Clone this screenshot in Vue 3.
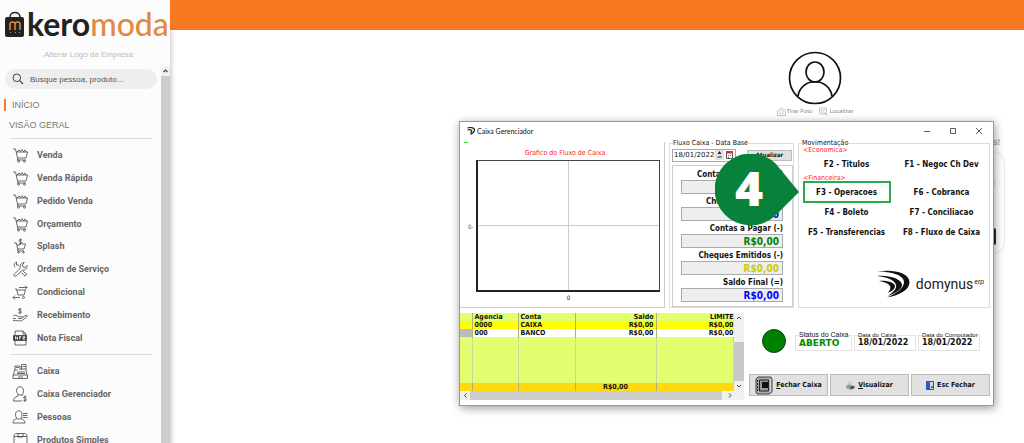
<script setup>
const cart = '<path d="M1 2h2.5l2 9h8.5l1.5-6H4.2"/><path d="M5 5l2-2 1.5 1.5L10 2.5l1.5 2L13 3l1 2"/><path d="M6 11l-.5 2h8"/><circle cx="6.5" cy="14.2" r="1"/><circle cx="12.5" cy="14.2" r="1"/>'
const smallCart = '<path d="M2 5h2.3l1.4 6H12l1.5-5H10M5 7h3"/><path d="M6 11l-.4 2H12"/><circle cx="6.5" cy="14.3" r=".8"/><circle cx="11.5" cy="14.3" r=".8"/>'
const dollar = (x, y) => `<path d="M${x + 1.5} ${y}q-1.5-1-2.6-.2c-1 .9 0 1.5 1 1.8s2.300 1 1 2q-1.300.7-2.600-.3M${x} ${y - 1.3}v6.200"/>`

const groups = [
  {
    name: 'sales',
    items: [
      { label: 'Venda', icon: cart },
      { label: 'Venda Rápida', icon: cart },
      { label: 'Pedido Venda', icon: cart },
      { label: 'Orçamento', icon: cart },
      { label: 'Splash', icon: smallCart + dollar(8.5, 2) },
      { label: 'Ordem de Serviço', icon: '<path d="M2 13.500 8.200 7.300C7.500 4 9.500 1.500 12.300 1.500L10.300 4l.7 2 2 .5 2-2c.3 3-2 5-4.600 4.500L4 15.200c-1.500.3-2.500-.7-2-1.700z"/><path d="M3 6.500c-1.500-2-1-4.500 1.500-5.500v3l2.500.2M11 10.200l3.800 3-1.600 2-3.700-3.500"/>' },
      { label: 'Condicional', icon: '<path d="M3 5h1.500l1.500 6h6l1.500-5H4.800"/><path d="M7 3.500h8M13 1.500l2 2-2 2M1 13.500h7M3 11.500l-2 2 2 2"/><circle cx="11.500" cy="13.500" r="1"/>' },
      { label: 'Recebimento', icon: dollar(8, 2.3) + '<path d="M1 9c2-1.500 4-.5 5.500.7h3c1.500.2 1.300 1.800-.2 1.800H6M9.800 10.500 14 8.300c1.300-.4 1.800.8.8 1.500l-5 4c-2.800.6-5-.8-8.800-.2M1 11.500h3"/>' },
      { label: 'Nota Fiscal', icon: '<path d="M3 5V1h8l3 3v2M3 11v4h11v-4M11 1v3h3"/><path d="M1.500 5.500h13v5h-13z" fill="#333"/><path d="M3.500 9.500v-3l2 3v-3M7.500 9.500v-3h2M7.500 8h1.500M11 8h2V6.700h-2v2.600h2" stroke="#fff"/>' }
    ]
  },
  {
    name: 'records',
    items: [
      { label: 'Caixa', icon: '<path d="M1 12h14.500v3.500H1zM1.500 12l1-5h3M15 12l-1-5V1.500H9.500V7M3 7V3h5v4M6 14h5"/><path d="M5 9h8M5 10.500h8M4 4.500h3M10.500 3.500h3M9 6h5"/>' },
      { label: 'Caixa Gerenciador', icon: '<path d="M4.500 4.500c0-5 7-5 7 0S9.500 9 8 9 4.500 7.500 4.500 4.500zM6 8.500v1.700C3 11 1.500 12 1.500 15H10M10 8.500v1.500"/>' + dollar(13, 11) },
      { label: 'Pessoas', icon: '<path d="M3.500 5.500c0-5 6.500-5 6.500 0S8.500 10 6.800 10 3.500 8.500 3.500 5.500zM5 9.500C2 10.700 1 11.500 1 14h12c0-2.500-1.500-3.500-4.300-4.500M11 4.500h4.500M11 6.500h4.500M11 8.500h4.500"/>' },
      { label: 'Produtos Simples', icon: '<path d="M2 3l1.500-1.500h10L15 3v12.500H2zM2 4.500h13M6 1.500v3.500h5V1.500M9.500 12h1M12 12h1"/>' }
    ]
  }
]

const flows = [
  { label: 'Contas a Receber (+)', value: 'R$0,00', tone: 'green' },
  { label: 'Cheques Receb (+)', value: 'R$0,00', tone: 'blue' },
  { label: 'Contas a Pagar (-)', value: 'R$0,00', tone: 'green' },
  { label: 'Cheques Emitidos (-)', value: 'R$0,00', tone: 'gold' },
  { label: 'Saldo Final (=)', value: 'R$0,00', tone: 'blue' }
]
</script>

<template>
  <div class="app">
    <aside class="sidebar">
      <div class="brand">
        <div class="logo">
          <svg width="21" height="28" viewBox="0 0 21 28">
            <path d="M5 9V6c0-6 10-6 10 0v3" fill="none" stroke="#222" stroke-width="1.500" />
            <rect x="0" y="6" width="19" height="20" rx="2" fill="#222" />
            <path d="M5 19v-6q0-2 2.500-2T10 13v6M10 13q0-2 2.500-2t2.500 2v6" fill="none" stroke="#e58a3c" stroke-width="1.500" />
            <path d="M5 21.500h1M10 21.500h1M14 21.500h1" stroke="#e58a3c" />
          </svg>
          <span class="word"><b>kero</b><span>moda</span></span>
        </div>
        <a href="#" class="change-logo">Alterar Logo da Empresa</a>
      </div>
      <div class="scroller">
        <div class="menu">
          <label class="search">
            <svg width="12" height="12" viewBox="0 0 12 12" fill="none" stroke="#444"><circle cx="4.800" cy="4.800" r="3.800" /><path d="M7.600 7.600 11 11" stroke-width="1.300" /></svg>
            <input type="text" placeholder="Busque pessoa, produto..." aria-label="Busque pessoa, produto" />
          </label>
          <a href="#" class="top active">INÍCIO</a>
          <a href="#" class="top">VISÃO GERAL</a>
          <nav v-for="group in groups" :key="group.name" class="group" :class="group.name">
            <a v-for="item in group.items" :key="item.label" href="#" class="item">
              <svg width="16" height="16" viewBox="0 0 16 16" v-html="item.icon" />
              <span>{{ item.label }}</span>
            </a>
          </nav>
        </div>
        <div class="track">
          <svg width="9" height="10" viewBox="0 0 9 10"><path d="M2.500 6 4.500 4l2 2" fill="none" stroke="#444" stroke-width="1.200" /></svg>
        </div>
      </div>
    </aside>

    <main class="main">
      <header class="bar"></header>
      <section class="profile">
        <svg width="54" height="54" viewBox="0 0 54 54" fill="none" stroke="#111" stroke-width="1.700">
          <circle cx="27" cy="27" r="25.500" />
          <ellipse cx="27" cy="21" rx="9" ry="10" />
          <path d="M10 45c3-19 31-19 34 0" />
        </svg>
        <div class="photo-links">
          <a href="#"><svg width="9" height="9" viewBox="0 0 9 9"><path d="M.5 3.500 4.500.7l4 2.800v5h-8z" /><circle cx="4.500" cy="5" r="2" /></svg>Tirar Foto</a>
          <a href="#"><svg width="9" height="9" viewBox="0 0 9 9"><path d="M.5 1h7v6h-7zM.5 3h7M2 5h3M5 5l3.500 3.500M6 7.500h2" /></svg>Localizar</a>
        </div>
        <p class="greeting">s!</p>
        <div class="card">
          <svg class="arc" width="8" height="28" viewBox="0 0 8 28" fill="none"><path d="M0 2.500h7" stroke="#ddd" /><path d="M0 19c6 0 7-6 5-14" stroke="#f3dccb" stroke-width="2" /></svg>
          <div class="dark"></div>
        </div>
      </section>
    </main>

    <section class="window">
      <div class="titlebar">
        <svg width="8" height="8" viewBox="0 0 8 8" fill="none" stroke="#222"><path d="M.5 1C4-.2 8 1 7.500 3.500c-.5 1.800-2 3-4 4M.5 3c3-1 6 .5 3 3" stroke-width="1.200" /></svg>
        <span class="title">Caixa Gerenciador</span>
        <button aria-label="Minimizar"><svg width="8" height="8"><path d="M1 4.500h6" /></svg></button>
        <button aria-label="Maximizar"><svg width="8" height="8"><path d="M1.500 1.500h5v5h-5z" /></svg></button>
        <button aria-label="Fechar janela"><svg width="8" height="8"><path d="M1 1l6 6M7 1 1 7" /></svg></button>
      </div>

      <div class="upper">
        <div class="chart">
          <i class="dash"></i>
          <h2>Grafico do Fluxo de Caixa</h2>
          <div class="plot-row"><span>0-</span><div class="plot"></div></div>
          <div class="x-label">0</div>
        </div>

        <fieldset class="flow">
          <legend>Fluxo Caixa - Data Base</legend>
          <div class="date-row">
            <div class="date">
              <input type="text" value="18/01/2022" aria-label="Data base" />
              <svg width="19" height="10" viewBox="0 0 19 10"><path d="M0 0h9v10H0z" fill="#e3e3e3" /><path d="M4.500 1 6.500 4h-4zM2.500 6.500h4v1h-4z" fill="#222" /><path d="M11.500 1.500h6v7h-6z" fill="#fff" stroke="#555" /><path d="M11 1h7v2.500h-7z" fill="#c33" /><path d="M13 5h1v1h-1zM15 5h1v1h-1zM13 7h1v1h-1z" fill="#36a" /></svg>
            </div>
            <button class="update">Atualizar</button>
          </div>
          <div class="totals">
            <label v-for="f in flows" :key="f.label">{{ f.label }}
              <input type="text" readonly :value="f.value" :class="f.tone" />
            </label>
          </div>
        </fieldset>

        <fieldset class="moves">
          <legend>Movimentação</legend>
          <h3>&lt;Economica&gt;</h3>
          <div class="pair"><button>F2 - Titulos</button><button>F1 - Negoc Ch Dev</button></div>
          <h3 class="second">&lt;Financeira&gt;</h3>
          <div class="pair"><button class="marked">F3 - Operacoes</button><button>F6 - Cobranca</button></div>
          <div class="pair"><button>F4 - Boleto</button><button>F7 - Conciliacao</button></div>
          <div class="pair"><button>F5 - Transferencias</button><button>F8 - Fluxo de Caixa</button></div>
          <div class="domynus">
            <svg width="34" height="28" viewBox="0 0 34 28" fill="#111">
              <path d="M0 1.500C15-1 32 2 32.500 12 32.500 20 23 25 10 27.500c9-4 17-9 17-15.500C27 5 14 1.500 0 1.500z" />
              <path d="M0 6C12 5 25 9 25 15 25 19 19 23 11 26 16 22 20 19 19 15 18 10 10 7 0 6z" />
              <path d="M2 11C10 10 18 13 18 16 18 19 15 21 11 23 13 20 14 18 13 16 11 13 7 12 2 11z" />
            </svg>
            <span>domynus</span><sup>erp</sup>
          </div>
        </fieldset>
      </div>

      <div class="lower">
        <div class="grid-box">
          <div class="grid-main">
            <table>
              <colgroup><col class="c0" /><col class="c1" /><col class="c2" /><col class="c3" /><col /></colgroup>
              <thead><tr><th></th><th>Agencia</th><th>Conta</th><th class="r">Saldo</th><th class="r">LIMITE</th></tr></thead>
              <tbody>
                <tr class="sel"><td></td><td>0000</td><td>CAIXA</td><td class="r">R$0,00</td><td class="r">R$0,00</td></tr>
                <tr class="row"><td class="handle"></td><td>000</td><td>BANCO</td><td class="r">R$0,00</td><td class="r">R$0,00</td></tr>
                <tr class="blank"><td></td><td></td><td></td><td></td><td></td></tr>
              </tbody>
              <tfoot><tr><td></td><td></td><td></td><td class="c">R$0,00</td><td></td></tr></tfoot>
            </table>
            <div class="vscroll">
              <svg width="10" height="10" viewBox="0 0 10 10"><path d="M3 6l2-2 2 2" /></svg>
              <div class="thumb"></div>
              <svg width="10" height="10" viewBox="0 0 10 10"><path d="M3 4l2 2 2-2" /></svg>
            </div>
          </div>
          <div class="hscroll">
            <svg width="10" height="9" viewBox="0 0 10 9"><path d="M6.500 2.500l-2 2 2 2" /></svg>
            <div class="thumb"></div>
            <svg width="22" height="9" viewBox="0 0 22 9"><path d="M7 2.500l2 2-2 2" /></svg>
          </div>
        </div>

        <div class="side">
          <div class="status">
            <svg width="24" height="24" viewBox="0 0 24 24"><circle cx="12" cy="12" r="11.500" fill="#008000" stroke="#143c14" /></svg>
            <fieldset class="first"><legend>Status do Caixa</legend><strong class="open">ABERTO</strong></fieldset>
            <fieldset><legend>Data do Caixa</legend><strong>18/01/2022</strong></fieldset>
            <fieldset><legend>Data do Computador</legend><strong>18/01/2022</strong></fieldset>
          </div>
          <div class="actions">
            <button>
              <svg width="18" height="19" viewBox="0 0 18 19"><path d="M1 3l2-2h13l1 2v13l-3 2H2l-1-2z" fill="#aaa" stroke="#444" /><path d="M4.500 4h9v11h-9z" fill="#999" stroke="#222" /><path d="M7 6h6v6H7z" fill="#111" /><path d="M2.500 4v12" stroke="#222" stroke-dasharray="2 1" /><path d="M15.500 3v13" stroke="#ddd" /></svg>
              <span><u>F</u>echar Caixa</span>
            </button>
            <button>
              <svg width="9" height="9" viewBox="0 0 9 9"><path d="M2 0h3l1 4H2z" fill="#bcd3ee" /><path d="M0 5l3-1.500L9 5v2L5 9 0 7z" fill="#999" /><path d="M4 6l4-1v2L5 8z" fill="#444" /></svg>
              <span><u>V</u>isualizar</span>
            </button>
            <button>
              <svg width="8" height="9" viewBox="0 0 8 9"><path d="M.5.5h7v8h-7z" fill="#cde" stroke="#456" /><path d="M0 0l4 1.500V9L0 8z" fill="#3157c8" /><path d="M5 5h2v2H5z" fill="#2a9a4a" /></svg>
              <span>Esc Fechar</span>
            </button>
          </div>
        </div>
      </div>

      <svg class="step" width="85" height="72" viewBox="0 0 85 72" role="img" aria-label="Passo 4">
        <path d="M84 38 60 62A36 36 0 1 1 61 10z" fill="#08813a" />
        <text x="34" y="52" text-anchor="middle">4</text>
      </svg>
    </section>
  </div>
</template>

<style>
body { background: #fff; }
</style>

<style scoped>
* { box-sizing: border-box; }
a { color: inherit; text-decoration: none; }
button, input { font: inherit; color: inherit; padding: 0; border: 0; background: none; min-width: 0; }
h2, h3, p { margin: 0; font-weight: 400; }
fieldset { margin: 0; padding: 0; min-width: 0; border: 1px solid #ddd; }
legend { padding: 0; font-size: 7px; line-height: 8px; white-space: nowrap; }
svg { flex: none; display: block; }

.app { position: relative; display: flex; height: 100vh; overflow: hidden; font-family: "Liberation Sans", sans-serif; color: #555; }

.sidebar { display: flex; flex-direction: column; flex: 0 0 170px; min-width: 0; background: #fcfcfc; box-shadow: 1px 30px 5px rgba(0, 0, 0, .25); z-index: 1; }
.brand { display: flex; flex-direction: column; height: 66px; padding: 11px 0 0 5px; }
.logo { display: flex; gap: 1px; height: 28px; }
.word { font: 500 32px/26px Lato, sans-serif; color: #df8a41; }
.word b { font-weight: 700; color: #222; }
.change-logo { margin: 11px 4px 0 6px; text-align: center; font-size: 8px; line-height: 10px; color: #bbb; }
.scroller { display: flex; flex: 1; min-height: 0; }
.menu { flex: 1; min-width: 0; overflow: hidden; padding: 3px 4px 0 5px; }
.track { flex: 0 0 9px; background: #cdcdcd; }
.track svg { background: #f1f1f1; }
.search { display: flex; align-items: center; gap: 6px; height: 20px; padding: 0 7px; border-radius: 10px; background: #eee; }
.search input { flex: 1; outline: 0; font-size: 8px; }
.search input::placeholder { color: #555; opacity: 1; }
.top { display: block; margin-top: 8px; padding-left: 4px; font-size: 9px; line-height: 12px; color: #777; }
.top.active { margin-top: 10px; margin-left: -1px; border-left: 2px solid #f97b20; padding-left: 6px; }
.group { display: grid; grid-auto-rows: 1fr; width: 143px; margin: 7px 0 0 5px; padding-top: 5px; border-top: 1px solid #ddd; }
.sales { height: 211px; }
.records { height: 97px; margin-top: 5px; }
.item { display: flex; align-items: center; gap: 9px; padding-left: 2px; font: 700 9px/12px Roboto, sans-serif; color: #666; white-space: nowrap; }
.item svg { fill: none; stroke: #444; stroke-width: .8; }

.main { flex: 1; display: flex; flex-direction: column; }
.bar { height: 30px; background: #f77a20; }
.profile { align-self: flex-end; display: flex; flex-direction: column; align-items: center; width: 380px; margin-right: 19px; padding-top: 21px; }
.photo-links { display: flex; gap: 7px; margin-top: 2px; font-size: 6px; line-height: 9px; color: #888; }
.photo-links a { display: flex; gap: 1px; }
.photo-links svg { fill: none; stroke: #bbb; stroke-width: .8; }
.greeting { align-self: flex-end; margin: 21px 5px 0 0; font-size: 9px; line-height: 10px; color: #888; }
.card { display: flex; flex-direction: column; align-items: flex-end; gap: 28px; width: 100%; height: 103px; margin-top: 4px; padding: 20px 8px 0; border: 1px solid #e8e8e8; border-radius: 12px; }
.dark { width: 60px; height: 17px; border-radius: 2px; background: #2b2b2b; }

.window { position: absolute; z-index: 2; top: 121px; left: 459px; right: 30px; display: flex; flex-direction: column; padding-bottom: 5px; background: #fff; border: 1px solid #999; box-shadow: 1px 2px 9px rgba(0, 0, 0, .4); color: #111; font-family: "DejaVu Sans Condensed", "DejaVu Sans", sans-serif; }
.titlebar { display: flex; align-items: center; gap: 18px; height: 17px; padding: 0 10px 0 7px; }
.title { flex: 1; margin-left: -16px; font: 7px/10px Lato, sans-serif; }
.titlebar button svg { fill: none; stroke: #333; stroke-width: .8; }

.upper { display: grid; grid-template-columns: 205px 125px minmax(0, 1fr); column-gap: 4px; height: 169px; padding-right: 3px; }
.chart { margin-top: 3px; height: 166px; border-right: 1px solid #ccc; border-bottom: 1px solid #ccc; }
.dash { display: block; width: 4px; height: 1px; margin-left: 4px; background: #2e2; }
.chart h2 { margin-top: 6px; padding-left: 6px; text-align: center; font-size: 7px; line-height: 9px; color: #f22; }
.plot-row { display: flex; align-items: center; margin: 2px 4px 0 8px; font-size: 6px; color: #555; }
.plot-row span { flex: 0 0 8px; white-space: nowrap; }
.plot { flex: 1; height: 132px; border: 1px solid #444; border-left: 2px solid #222; border-bottom: 2px solid #222; background: linear-gradient(#ccc, #ccc) 50% 0 / 1px 100% no-repeat, linear-gradient(#ccc, #ccc) 0 50% / 100% 1px no-repeat; }
.x-label { padding-left: 13px; text-align: center; font-size: 6px; line-height: 12px; }

.flow legend { margin-left: 3px; }
.date-row { display: flex; justify-content: space-between; align-items: center; height: 16px; padding: 0 1px 0 2px; }
.date { display: flex; width: 64px; height: 13px; align-items: center; justify-content: space-between; border: 1px solid #aaa; padding: 0 1px; }
.date input { width: 41px; font: 7px/10px "DejaVu Sans", sans-serif; }
.update { width: 45px; height: 11px; border: 1px solid #bbb; background: #e1e1e1; font-weight: 700; font-size: 6px; line-height: 8px; }
.totals { display: grid; grid-auto-rows: 27px; margin: 2px 0 0 2px; height: 142px; border: 1px solid #ccc; padding: 3px 9px 0 8px; font-weight: 700; font-size: 8px; line-height: 11px; }
.totals label { display: flex; flex-direction: column; align-items: flex-end; white-space: nowrap; }
.totals input { width: 100%; height: 14px; border: 1px solid #aaa; background: #eee; padding-right: 3px; text-align: right; font-size: 10px; }
.green { color: #008000; }
.blue { color: #00f; }
.gold { color: #cc0; }

.moves legend { margin-left: 3px; }
.moves h3 { height: 6px; margin-left: 4px; font-size: 7px; line-height: 6px; color: #f22; }
.moves .second { margin-top: 2px; }
.pair { display: grid; grid-template-columns: 1fr 1fr; justify-items: center; height: 20px; font-weight: 700; font-size: 8px; }
.pair button { width: 88px; height: 22px; white-space: nowrap; }
.pair .marked { border: 2px solid #2aaa4c; }
.domynus { display: flex; justify-content: flex-end; align-items: center; margin: 29px 5px 0 0; font: 14px/20px Roboto, sans-serif; color: #222; }
.domynus svg { margin-right: 5px; }
.domynus sup { align-self: flex-start; margin: 8px 0 0 1px; font-size: 7px; line-height: 8px; font-style: italic; }

.lower { display: grid; grid-template-columns: 284px minmax(0, 1fr); margin-top: 5px; }
.grid-box { font-weight: 700; font-size: 7px; }
.grid-main { display: flex; }
table { flex: 1; table-layout: fixed; width: 100%; border-collapse: collapse; background: #e1ff6e; line-height: 8px; }
.c0 { width: 12px; } .c1 { width: 46px; } .c2 { width: 57px; } .c3 { width: 81px; }
th, td { height: 8px; padding: 0 2px; text-align: left; border-right: 1px solid #b0b070; white-space: nowrap; }
tr > :last-child { border-right: 0; padding-right: 0; }
th.r, td.r { text-align: right; }
td.c { text-align: center; }
.sel { background: #ff0; }
.row { background: #fff; }
.handle { background: #bbb; }
.blank td { height: 46px; border-right: 1px dotted #b8c080; }
tfoot { background: #ffd90f; }
.vscroll { display: flex; flex-direction: column; justify-content: space-between; flex: 0 0 10px; background: #f0f0f0; }
.vscroll .thumb { margin-top: 18px; height: 39px; background: #c8c8c8; }
.vscroll svg, .hscroll svg { fill: none; stroke: #444; stroke-width: 1; }
.hscroll { display: flex; height: 9px; background: #f0f0f0; }
.hscroll .thumb { flex: 1; background: #cdcdcd; }

.side { padding: 16px 3px 0 5px; }
.status { display: flex; align-items: center; gap: 2px; margin-left: 13px; }
.status fieldset { width: 62px; height: 20px; border-color: #e3e3e3; }
.status .first { width: 57px; margin-left: 7px; }
.status legend { margin-left: 3px; font: 6px/8px "Liberation Sans", sans-serif; }
.status .first legend { font-size: 7px; }
.status strong { display: block; margin-left: 3px; font: 700 8px/8px "DejaVu Sans", sans-serif; }
.status .open { font-size: 9px; color: #008a00; }
.actions { display: grid; grid-template-columns: repeat(3, 1fr); gap: 2px; margin-top: 21px; font-weight: 700; font-size: 7px; }
.actions button { display: flex; align-items: center; justify-content: center; gap: 3px; height: 22px; border: 1px solid #bbb; background: #e1e1e1; white-space: nowrap; }

.step { position: absolute; left: 255px; top: 32px; }
.step text { font: 800 48px "Open Sans", sans-serif; fill: #fff; }
</style>
